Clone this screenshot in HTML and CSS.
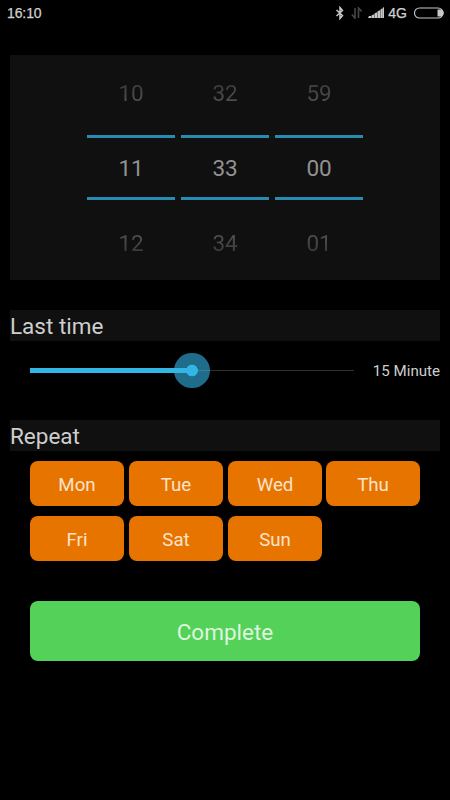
FILE: index.html
```html
<!DOCTYPE html>
<html lang="en">
<head>
<meta charset="utf-8">
<title>Timer</title>
<link rel="stylesheet" href="styles.css">
</head>
<body>
<header class="status">
  <span class="clock">16:10</span>
  <div class="indicators">
    <svg class="bluetooth" width="10" height="14" viewBox="0 0 10 14"><path d="M1.500 4l6 5.500L5 12.500v-11l2.500 3L1.500 10"/></svg>
    <svg class="data" width="12" height="12" viewBox="0 0 12 12"><path d="M4 1v10L.8 7.500"/><path d="M7.500 11V1l3.200 3.500"/></svg>
    <svg class="signal" width="17" height="12" viewBox="0 0 17 12"><path d="M1 9h2v2H0zM4 8h2v3H4zM7 6h2v5H7zM10 4h2v7h-2zM13 2h1.500v9H13zM15 .5h1V11h-1z"/><path class="base" d="M0 11L16 0v11z"/></svg>
    <span class="network">4G</span>
    <svg class="battery" width="31" height="12" viewBox="0 0 31 12"><rect x=".5" y="1" width="28.500" height="10" rx="5"/><path d="M23.500 2.500h2.500a3.500 3.500 0 0 1 0 7h-2.500z"/><path d="M29.500 4.500q1.200 1.500 0 3z"/></svg>
  </div>
</header>
<main>
  <section class="picker">
    <div class="wheel"><span>10</span><span class="selected">11</span><span class="next">12</span></div>
    <div class="wheel"><span>32</span><span class="selected">33</span><span class="next">34</span></div>
    <div class="wheel"><span>59</span><span class="selected">00</span><span class="next">01</span></div>
  </section>
  <h2>Last time</h2>
  <div class="duration">
    <div class="slider"><div class="fill"></div><div class="thumb"></div></div>
    <span class="value">15 Minute</span>
  </div>
  <h2>Repeat</h2>
  <div class="days">
    <button>Mon</button><button>Tue</button><button>Wed</button><button>Thu</button>
    <button>Fri</button><button>Sat</button><button>Sun</button>
  </div>
  <button class="complete">Complete</button>
</main>
</body>
</html>
```
FILE: styles.css
```css
* { box-sizing: border-box; }
body {
  margin: 0;
  height: 800px;
  background: #000;
  color: #cecece;
  font-family: Roboto, sans-serif;
  overflow: hidden;
}
.status {
  display: flex;
  justify-content: space-between;
  align-items: center;
  height: 26px;
  padding: 0 5px 0 7px;
  font: 14px/26px "Liberation Sans", sans-serif;
  color: #d0d0d0;
}
.clock { letter-spacing: -0.1px; -webkit-text-stroke: .25px; }
.indicators { display: flex; align-items: center; }
.indicators svg { display: block; fill: none; stroke: #c8c8c8; stroke-width: 1.5; }
.indicators .bluetooth { margin-right: 6px; }
.indicators .data { margin-right: 5px; stroke: #474747; stroke-width: 1.6; }
.indicators .signal { margin-right: 3px; fill: #c8c8c8; stroke: none; }
.signal .base { opacity: .6; }
.network { margin-right: 7px; -webkit-text-stroke: .25px; }
.indicators .battery { stroke-width: 1.1; }
.indicators .battery path { fill: #c8c8c8; stroke: none; }
main { padding: 29px 10px 0; }
.picker {
  display: flex;
  justify-content: center;
  gap: 6px;
  height: 225px;
  background: #101010;
}
.wheel {
  display: grid;
  grid-template-rows: 80px 65px 80px;
  width: 88px;
  text-align: center;
  font-size: 22.5px;
  letter-spacing: -0.2px;
  color: #474747;
}
.wheel span { line-height: 77px; }
.wheel .selected {
  border: solid #288bb1;
  border-width: 3px 0;
  line-height: 61px;
  color: #929292;
}
.wheel .next {
  line-height: 87px;
  color: transparent;
  background: linear-gradient(#505050 35px, #363636 55px);
  background-clip: text;
}
.wheel span:first-child {
  color: transparent;
  background: linear-gradient(#3d3d3d 30px, #505050 48px);
  background-clip: text;
}
h2 {
  height: 31px;
  margin: 30px 0 0;
  background: #101010;
  font-size: 22.5px;
  font-weight: 400;
  line-height: 33px;
}
.duration {
  display: flex;
  justify-content: space-between;
  align-items: center;
  height: 59px;
  padding-left: 20px;
}
.slider {
  position: relative;
  width: 324px;
  height: 1px;
  background: #303030;
}
.fill {
  position: absolute;
  top: -2px;
  width: 162px;
  height: 5px;
  background: #33b5e5;
}
.thumb {
  position: absolute;
  left: 144px;
  top: -17.500px;
  width: 35.500px;
  height: 35.500px;
  border-radius: 50%;
  background: radial-gradient(circle, #33b5e5 5.500px, #33b5e599 6.200px);
}
.value { font-size: 15.100px; }
.duration + h2 { margin-top: 20px; }
.days {
  display: grid;
  grid-template-columns: 94px 94px 94px 94px;
  column-gap: 5px;
  margin-right: -2px;
  row-gap: 10px;
  padding: 10px 20px 0;
}
button {
  height: 45px;
  padding: 2px 0 0;
  border: 0;
  border-radius: 8px;
  background: #e87400;
  color: #fbe3cc;
  font: 18.700px Roboto, sans-serif;
}
.days button:nth-child(4) { margin: 0 1px 0 -1px; }
.complete {
  display: block;
  width: 390px;
  height: 60px;
  margin: 40px 20px 0;
  background: #54d158;
  color: #ddf6de;
  font-size: 22.500px;
}
```
